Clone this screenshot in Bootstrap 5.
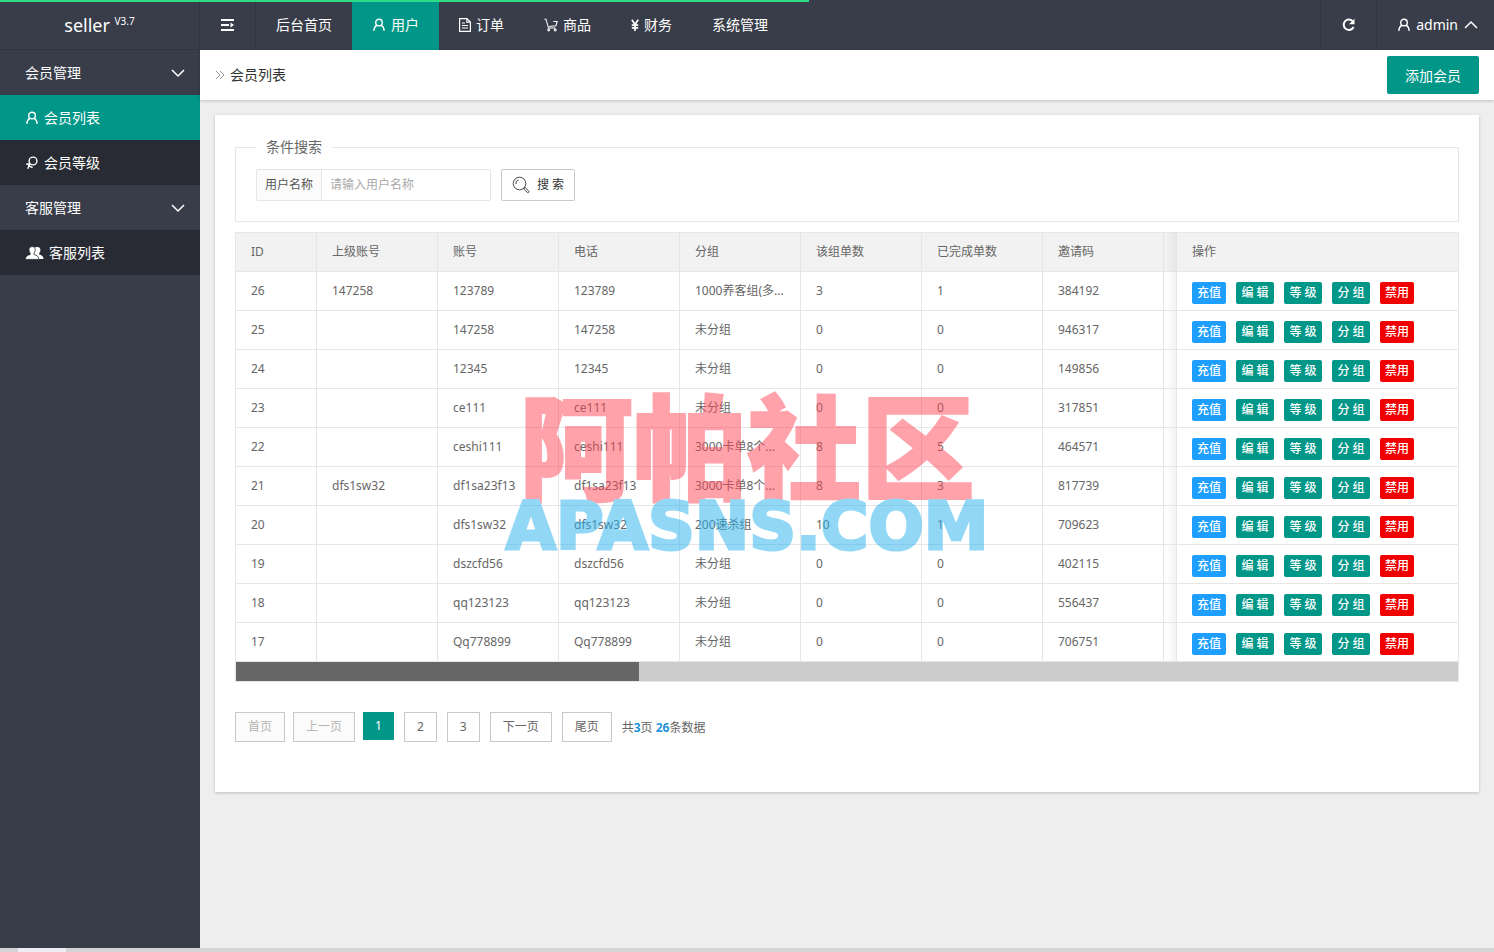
<!DOCTYPE html>
<html lang="zh-CN">
<head>
<meta charset="utf-8">
<meta name="viewport" content="width=device-width, initial-scale=1">
<title>seller - 会员列表</title>
<link href="https://cdn.jsdelivr.net/npm/bootstrap@5.3.0/dist/css/bootstrap.min.css" rel="stylesheet">
<style>
  :root { --dark: #393d49; --darker: #282b33; --teal: #009688; --line: #e6e6e6; }
  body { font: 14px/24px "Noto Sans", "Noto Sans CJK SC", sans-serif; color: #333; background: #eee; }
  svg { display: block; flex: none; fill: none; stroke: currentColor; }
  .load-line { height: 2px; background: #2ddb85; z-index: 5; }
  .topbar { height: 50px; background: var(--dark); }
  .logo { width: 200px; font-size: 18px; color: #fff; border-right: 1px solid #31353f; border-bottom: 1px solid #31353f; }
  .logo sup { font-size: 10px; top: -7px; }
  .topbar .nav-link, .side .nav-link { color: #fff; display: flex; align-items: center; gap: 5px; border-radius: 0; }
  .topbar .nav-link { padding: 0 20px; height: 50px; }
  .topbar .nav-link.active, .side .nav-link.active { background: var(--teal); }
  .edge-l { border-left: 1px solid #31353f; }
  .edge-r { border-right: 1px solid #31353f; }
  .side { width: 200px; background: var(--dark); }
  .side .nav-link { height: 45px; padding: 0 15px 0 25px; }
  .side .sub-list { background: var(--darker); }
  .crumb-bar { height: 50px; padding: 0 15px; background: #fff; box-shadow: 0 1px 3px rgba(0,0,0,.2); }
  .crumb-bar svg { color: #999; }
  .btn-teal { --bs-btn-color: #fff; --bs-btn-bg: var(--teal); --bs-btn-hover-color: #fff; --bs-btn-hover-bg: #33ab9f; --bs-btn-border-width: 0; }
  .btn-add { height: 38px; padding: 0 18px; font-size: 14px; border-radius: 2px; }
  .panel { margin: 15px; padding: 20px 20px 50px; background: #fff; box-shadow: 0 1px 3px rgba(0,0,0,.2); }
  .panel, .panel input, .panel .btn { font-size: 12px; }
  .panel { color: #666; }
  .search-box { border: 1px solid var(--line); padding: 10px 20px 20px; margin-bottom: 10px; }
  .search-box legend { float: none; width: auto; margin: 0; padding: 0 10px; font-size: 14px; line-height: 24px; }
  .search-row { gap: 10px; }
  .name-group { width: 235px; height: 32px; }
  .name-group .input-group-text { padding: 0 8px; font-size: 12px; color: #555; background: #fbfbfb; border-color: var(--line); border-radius: 2px; }
  .name-group .form-control { padding: 0 8px; border-color: var(--line); border-radius: 2px; }
  .name-group .form-control::placeholder { color: #a9a9a9; }
  .btn-find { height: 32px; padding: 0 10px; border: 1px solid #c9c9c9; border-radius: 2px; color: #333; background: #fff; gap: 7px; }
  .grid-wrap { border: 1px solid var(--line); }
  .grid { table-layout: fixed; width: 100%; font-size: 12px; border-collapse: separate; border-spacing: 0; }
  .grid th, .grid td { height: 39px; padding: 0 15px; font-weight: 400; white-space: nowrap; overflow: hidden; text-overflow: ellipsis; border: solid var(--line); border-width: 0 1px 1px 0; vertical-align: middle; }
  .grid th { background: #f2f2f2; }
  .grid th:last-child, .grid td:last-child { border-right: 0; }
  .grid .fade-col { padding: 0; background-image: linear-gradient(to right, rgba(0,0,0,0) 20%, rgba(0,0,0,.05)); }
  .c-id { width: 81px; } .c-std { width: 121px; } .c-ops { width: 281px; }
  .ops { gap: 10px; padding-top: 4px; }
  .ops .btn { height: 22px; padding: 0 5px; line-height: 22px; border: 0; border-radius: 2px; font-weight: 500; color: #fff; }
  .ops .btn-teal { min-width: 38px; }
  .b-blue { background: #1e9fff; } .b-red { background: #f00000; }
  .scroll-track { height: 19px; border-radius: 0; background: #ccc; }
  .scroll-track .progress-bar { background: #666; }
  .pager { margin-top: 30px; }
  .pager .page-item .page-link { height: 30px; padding: 0 12px; line-height: 28px; font-size: 12px; color: #666; border: 1px solid #c9c9c9; border-radius: 0; margin: 0 10px 0 0; }
  .pager .page-item.disabled .page-link { color: #b5b5b5; background: #fbfbfb; margin-right: 8px; }
  .pager .page-item.active .page-link { height: 28px; color: #fff; background: var(--teal); border-width: 0; }
  .pager b { color: #2495dc; }
  .foot-strip { height: 4px; padding-left: 18px; background: #d4d4d6; }
  .foot-strip span { width: 48px; height: 4px; background: #eeeef2; }
  .mark-layer { top: 267px; left: 50%; width: 488px; margin-left: -344px; text-align: center; opacity: .5; pointer-events: none; white-space: nowrap; }
  .mark-cn { font: 900 114px/120px "Noto Sans CJK SC", sans-serif; color: #ff4758; -webkit-text-stroke: 2px #ff4758; }
  .mark-en { font: bold 65px/50px "DejaVu Sans", sans-serif; color: #27b3ef; -webkit-text-stroke: 3px #27b3ef; }
</style>
</head>
<body class="d-flex flex-column min-vh-100">
<svg class="d-none">
  <symbol id="i-user" viewBox="0 0 14 14"><circle cx="7" cy="4.500" r="3.300"/><path d="M4.900 7.200C3 8.400 2 10.300 1.800 12.900M9.100 7.200c1.900 1.200 2.900 3.100 3.100 5.700"/></symbol>
  <symbol id="i-down" viewBox="0 0 14 14"><path d="M1 4l6 6 6-6"/></symbol>
</svg>

<div class="load-line position-absolute top-0 start-0" style="width:54.150%"></div>

<header class="topbar d-flex">
  <div class="logo d-flex align-items-center justify-content-center"><span>seller <sup>V3.7</sup></span></div>
  <nav class="nav flex-grow-1 flex-nowrap">
    <a class="nav-link edge-r" href="#" aria-label="收起菜单"><svg width="15" height="14" viewBox="0 0 15 14" stroke-width="2"><path d="M1 2h13M1 7h8M1 12h13"/><path d="M10.500 4.500v5L14 7z" fill="currentColor" stroke="none"/></svg></a>
    <a class="nav-link" href="#">后台首页</a>
    <a class="nav-link active" href="#"><svg width="14" height="14" stroke-width="1.400"><use href="#i-user"/></svg>用户</a>
    <a class="nav-link" href="#"><svg width="12" height="14" viewBox="0 0 12 14" stroke-width="1.200"><path d="M.6.600h7.400l3.400 3.400v9.400H.6zM7.800.600V4.200h3.600M3 5h3M3 7.500h6M3 10h6"/></svg>订单</a>
    <a class="nav-link" href="#"><svg width="14" height="14" viewBox="0 0 15 14" stroke-width="1.100"><path d="M.5.800h1.600l2.700 9.400h7.400M5.500 8.600l7.300-.8 1.400-4.600H10"/><circle cx="5" cy="12.300" r="1"/><circle cx="12" cy="12.300" r="1"/></svg>商品</a>
    <a class="nav-link" href="#"><svg width="8" height="12" viewBox="0 0 8 12" stroke-width="1.700"><path d="M.8.800L4 5.500 7.200.800M4 5.300V12M.8 6.200h6.400M.8 8.800h6.400"/></svg>财务</a>
    <a class="nav-link" href="#">系统管理</a>
  </nav>
  <nav class="nav flex-nowrap">
    <a class="nav-link edge-l" href="#" aria-label="刷新"><svg width="15" height="14" viewBox="0 0 15 14" stroke-width="2"><path d="M12 3.500A5.200 5.200 0 1 0 12.600 9"/><path d="M13.500.800v5.400H8z" fill="currentColor" stroke="none"/></svg></a>
    <a class="nav-link edge-l pe-3" href="#"><svg width="14" height="14" stroke-width="1.400"><use href="#i-user"/></svg>admin<svg width="15" height="14" viewBox="-1 0 15 14" stroke-width="1.500"><path d="M1 10l6-6 6 6"/></svg></a>
  </nav>
</header>

<div class="d-flex flex-grow-1">
  <aside class="side flex-shrink-0">
    <nav class="nav flex-column">
      <a class="nav-link justify-content-between" href="#">会员管理<svg width="14" height="14" stroke-width="1.500"><use href="#i-down"/></svg></a>
      <div class="sub-list">
        <a class="nav-link active" href="#"><svg width="14" height="14" stroke-width="1.400"><use href="#i-user"/></svg>会员列表</a>
        <a class="nav-link" href="#"><svg width="14" height="14" viewBox="0 0 14 14" stroke-width="1.400"><circle cx="8" cy="5" r="3.900"/><path d="M5 7.600L1.200 8.300M5 7.600L2.800 12.800M3 9.400l4.600 2.300"/></svg>会员等级</a>
      </div>
      <a class="nav-link justify-content-between" href="#">客服管理<svg width="14" height="14" stroke-width="1.500"><use href="#i-down"/></svg></a>
      <div class="sub-list">
        <a class="nav-link" href="#"><svg width="19" height="14" viewBox="0 0 19 14"><path fill="currentColor" stroke="none" d="M12.500 1c2 0 3 1.300 2.900 3 0 1.500-.6 2.500-1.200 3.100v1.500c2.400.8 4.200 1.400 4.300 4.400H9V1.800C10 1.200 11.500 1 12.500 1z"/><path fill="currentColor" stroke="#282b33" stroke-width=".8" d="M7.200.600c2 0 3.100 1.400 3 3.300 0 1.500-.6 2.600-1.200 3.200v1.400c2.400.8 4.700 1.300 4.800 4.900H.4c.1-3.600 2.400-4.100 4.800-4.900V7.100C4.600 6.500 4 5.400 4 3.900 3.900 2 5.200.600 7.200.600z"/></svg>客服列表</a>
      </div>
    </nav>
  </aside>

  <main class="flex-grow-1">
    <div class="crumb-bar d-flex align-items-center justify-content-between">
      <div class="d-flex align-items-center">
        <svg class="me-1" width="11" height="10" viewBox="0 0 11 10" stroke-width="1"><path d="M1 1l4 4-4 4M5 1l4 4-4 4"/></svg>会员列表
      </div>
      <button class="btn btn-teal btn-add" type="button">添加会员</button>
    </div>

    <section class="panel position-relative">
      <form>
        <fieldset class="search-box">
          <legend>条件搜索</legend>
          <div class="search-row d-flex">
            <div class="input-group name-group">
              <label class="input-group-text" for="uname">用户名称</label>
              <input class="form-control" id="uname" type="text" placeholder="请输入用户名称">
            </div>
            <button class="btn btn-find d-flex align-items-center" type="button"><svg width="18" height="18" viewBox="0 0 18 18" stroke-width=".9"><circle cx="7.500" cy="7.500" r="6.300"/><path d="M4 8a3.600 3.600 0 0 1 2.600-4.200M12 12l1.200-.4 3.600 3.500c.5 1-.5 1.900-1.400 1.400l-3.600-3.400z"/></svg>搜 索</button>
          </div>
        </fieldset>
      </form>

      <div class="grid-wrap">
        <table class="grid">
          <colgroup><col class="c-id"><col class="c-std" span="7"><col><col class="c-ops"></colgroup>
          <thead>
            <tr><th>ID</th><th>上级账号</th><th>账号</th><th>电话</th><th>分组</th><th>该组单数</th><th>已完成单数</th><th>邀请码</th><th class="fade-col"></th><th>操作</th></tr>
          </thead>
          <tbody id="rows"></tbody>
        </table>
        <div class="progress scroll-track"><div class="progress-bar" style="width:33%"></div></div>
      </div>

      <div class="pager d-flex">
        <ul class="pagination m-0">
          <li class="page-item disabled"><a class="page-link">首页</a></li>
          <li class="page-item disabled"><a class="page-link">上一页</a></li>
          <li class="page-item active"><a class="page-link" href="#">1</a></li>
          <li class="page-item"><a class="page-link" href="#">2</a></li>
          <li class="page-item"><a class="page-link" href="#">3</a></li>
          <li class="page-item"><a class="page-link" href="#">下一页</a></li>
          <li class="page-item"><a class="page-link" href="#">尾页</a></li>
        </ul>
        <span class="pt-1">共<b>3</b>页 <b>26</b>条数据</span>
      </div>

      <div class="mark-layer position-absolute">
        <div class="mark-cn">阿帕社区</div>
        <div class="mark-en">APASNS.COM</div>
      </div>
    </section>
  </main>
</div>
<footer class="foot-strip d-flex"><span></span></footer>

<script src="https://cdn.jsdelivr.net/npm/bootstrap@5.3.0/dist/js/bootstrap.bundle.min.js"></script>
<script>
  const members = [
    ['26', '147258', '123789', '123789', '1000养客组(多...', '3', '1', '384192'],
    ['25', '', '147258', '147258', '未分组', '0', '0', '946317'],
    ['24', '', '12345', '12345', '未分组', '0', '0', '149856'],
    ['23', '', 'ce111', 'ce111', '未分组', '0', '0', '317851'],
    ['22', '', 'ceshi111', 'ceshi111', '3000卡单8个...', '8', '5', '464571'],
    ['21', 'dfs1sw32', 'df1sa23f13', 'df1sa23f13', '3000卡单8个...', '8', '3', '817739'],
    ['20', '', 'dfs1sw32', 'dfs1sw32', '200速杀组', '10', '1', '709623'],
    ['19', '', 'dszcfd56', 'dszcfd56', '未分组', '0', '0', '402115'],
    ['18', '', 'qq123123', 'qq123123', '未分组', '0', '0', '556437'],
    ['17', '', 'Qq778899', 'Qq778899', '未分组', '0', '0', '706751']
  ];
  const ops = [['充值', 'b-blue'], ['编 辑', 'btn-teal'], ['等 级', 'btn-teal'], ['分 组', 'btn-teal'], ['禁用', 'b-red']]
    .map(([t, c]) => `<button type="button" class="btn ${c}">${t}</button>`).join('');
  document.getElementById('rows').innerHTML = members.map(m =>
    `<tr>${m.map(v => `<td>${v}</td>`).join('')}<td class="fade-col"></td><td><div class="ops d-flex">${ops}</div></td></tr>`).join('');
</script>
</body>
</html>
